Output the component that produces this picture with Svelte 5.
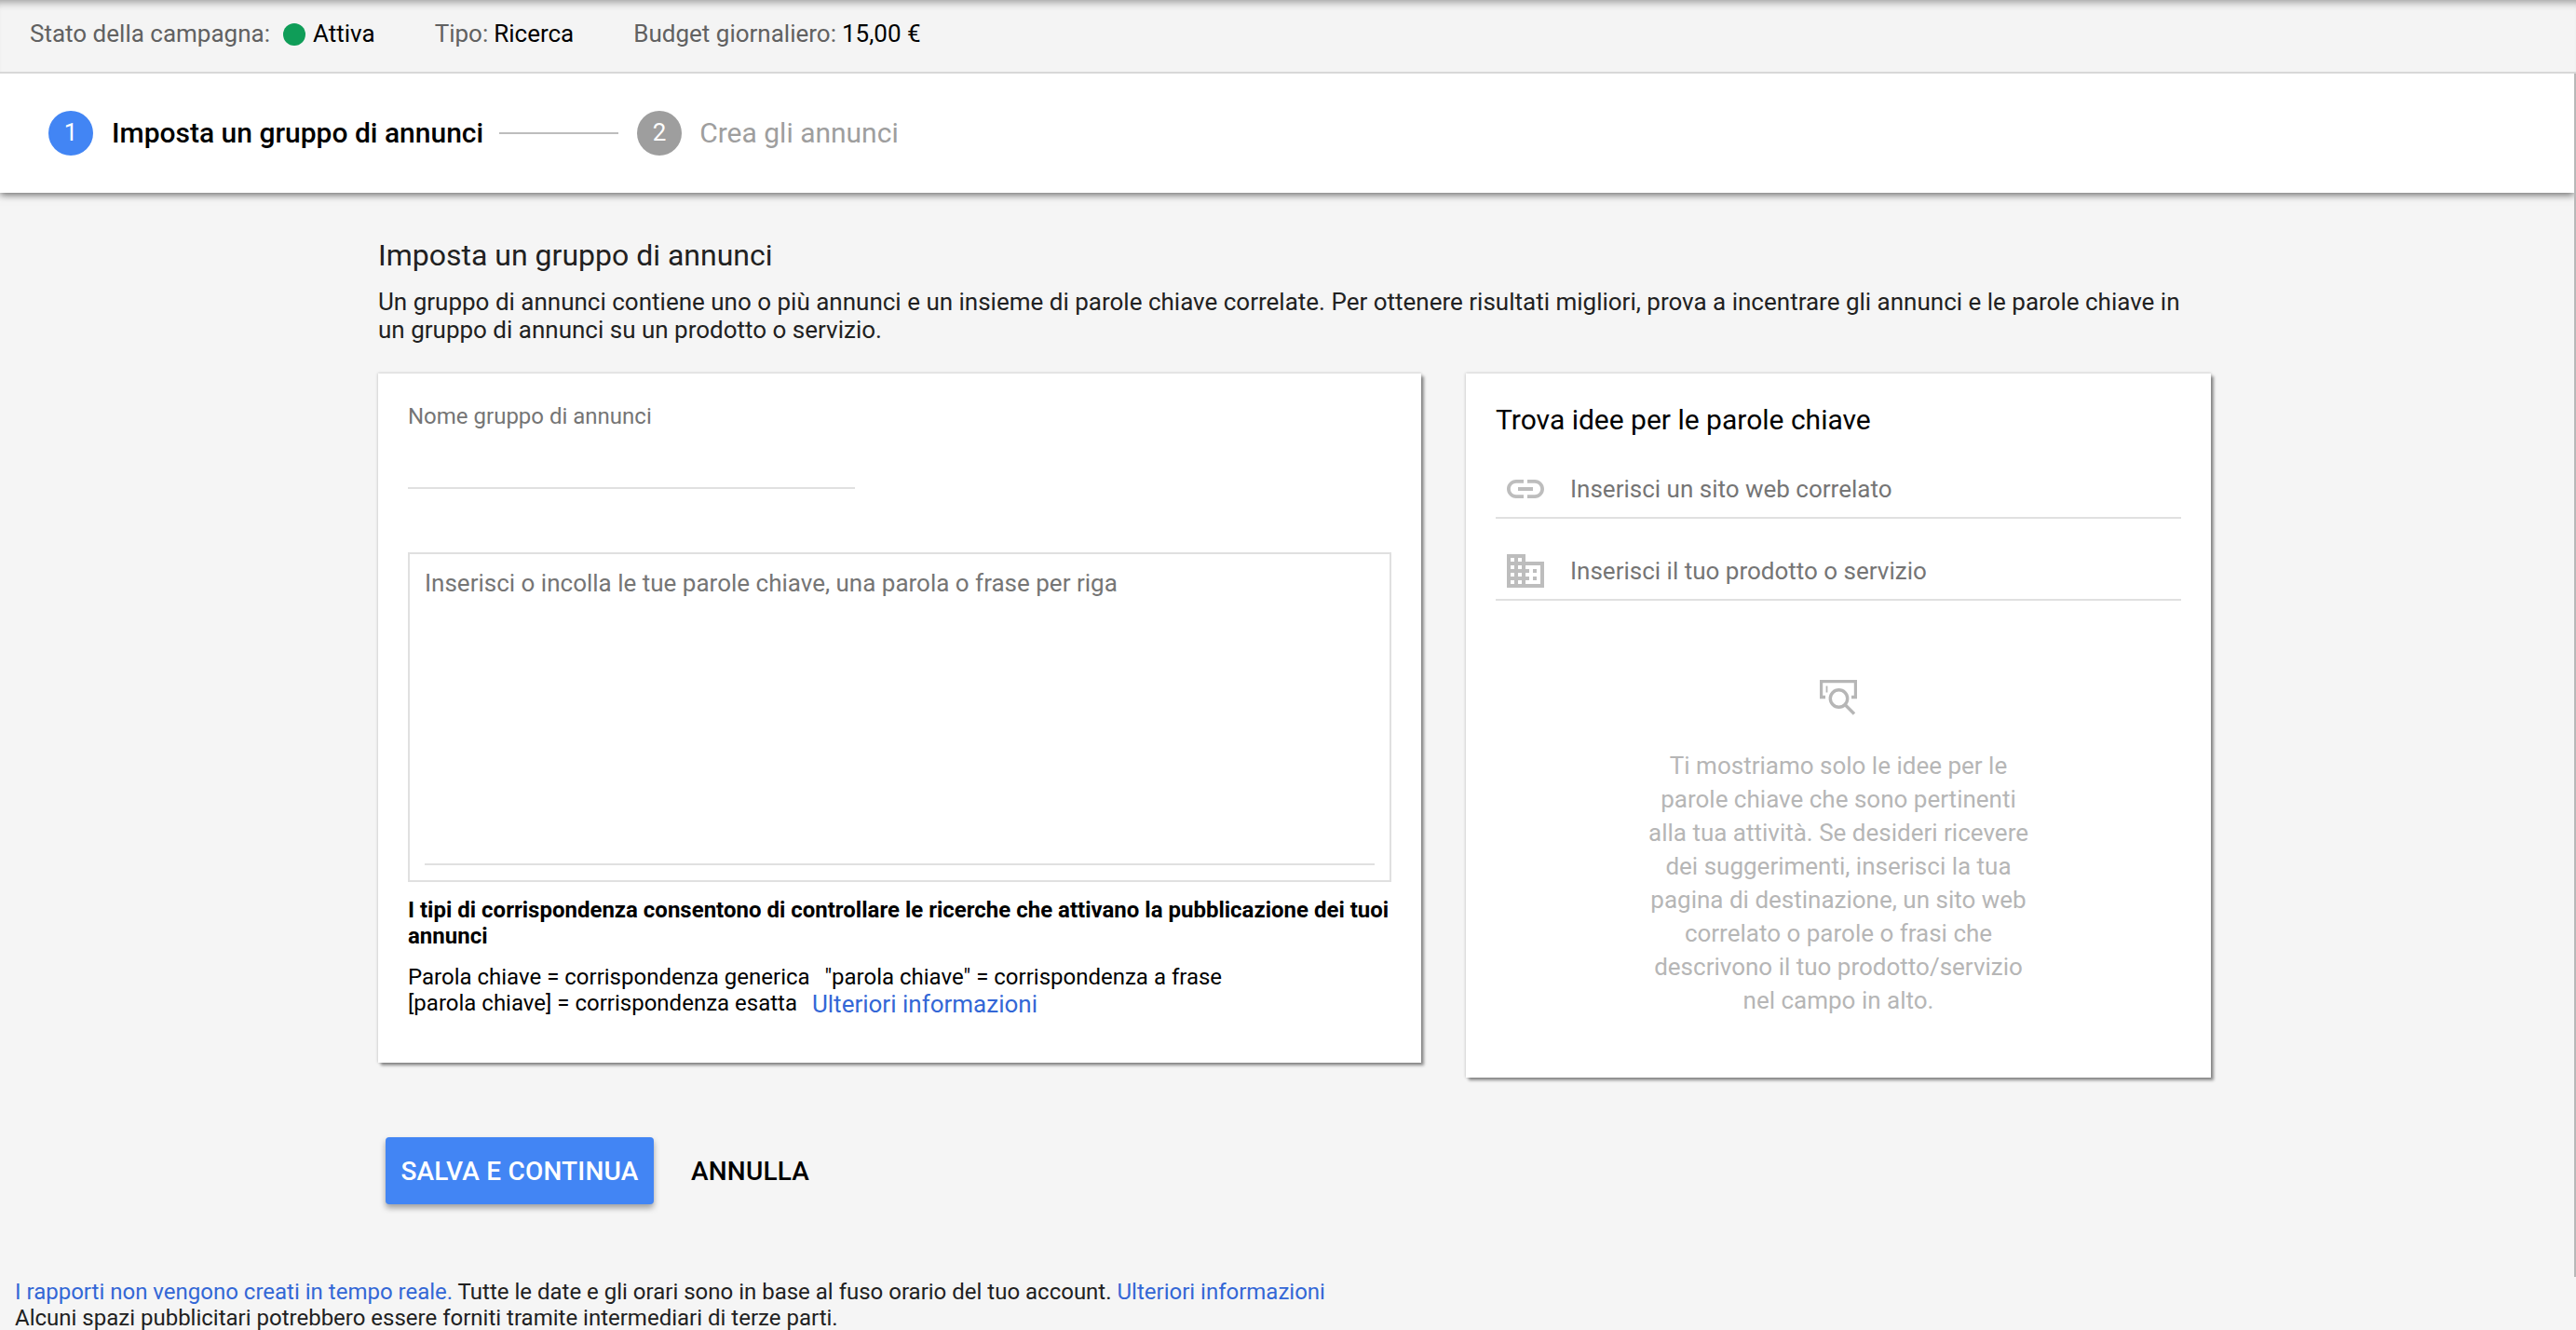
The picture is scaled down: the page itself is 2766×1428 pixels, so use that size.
<script>
	let groupName = '';
	let keywords = '';
	let website = '';
	let product = '';

	const status = [
		{ label: 'Stato della campagna:', value: 'Attiva', active: true },
		{ label: 'Tipo:', value: 'Ricerca' },
		{ label: 'Budget giornaliero:', value: '15,00 €' }
	];
</script>

<div class="page">
	<header class="status-bar">
		{#each status as item}
			<div class="status-item">
				<span class="status-label">{item.label}</span>
				{#if item.active}
					<span class="status-dot"></span>
				{/if}
				<span class="status-value">{item.value}</span>
			</div>
		{/each}
	</header>

	<div class="frame">
		<nav class="stepper">
			<span class="step-number active">1</span>
			<span class="step-title active">Imposta un gruppo di annunci</span>
			<span class="step-line"></span>
			<span class="step-number">2</span>
			<span class="step-title">Crea gli annunci</span>
		</nav>

		<main>
			<h1>Imposta un gruppo di annunci</h1>
			<p class="intro">
				Un gruppo di annunci contiene uno o più annunci e un insieme di parole chiave correlate. Per
				ottenere risultati migliori, prova a incentrare gli annunci e le parole chiave in<br />
				un gruppo di annunci su un prodotto o servizio.
			</p>

			<div class="cards">
				<section class="card group-card">
					<label class="group-label" for="group-name">Nome gruppo di annunci</label>
					<input id="group-name" class="group-input" bind:value={groupName} />
					<div class="keywords">
						<textarea
							bind:value={keywords}
							placeholder="Inserisci o incolla le tue parole chiave, una parola o frase per riga"
						></textarea>
					</div>
					<p class="match-title">
						I tipi di corrispondenza consentono di controllare le ricerche che attivano la
						pubblicazione dei tuoi<br />annunci
					</p>
					<p class="match-types">
						<span class="match">Parola chiave = corrispondenza generica</span>
						<span class="match">"parola chiave" = corrispondenza a frase</span><br />
						<span class="match">[parola chiave] = corrispondenza esatta</span>
						<a class="more" href="#info">Ulteriori informazioni</a>
					</p>
				</section>

				<section class="card ideas-card">
					<h2>Trova idee per le parole chiave</h2>
					<div class="idea-field">
						<svg viewBox="0 0 24 24">
							<path
								d="M3.9 12c0-1.71 1.39-3.1 3.1-3.1h4V7H7c-2.76 0-5 2.24-5 5s2.24 5 5 5h4v-1.9H7c-1.71 0-3.1-1.39-3.1-3.1zM8 13h8v-2H8v2zm9-6h-4v1.9h4c1.71 0 3.1 1.39 3.1 3.1s-1.39 3.1-3.1 3.1h-4V17h4c2.76 0 5-2.24 5-5s-2.24-5-5-5z"
							/>
						</svg>
						<input bind:value={website} placeholder="Inserisci un sito web correlato" />
					</div>
					<div class="idea-field">
						<svg viewBox="0 0 24 24">
							<path
								d="M12 7V3H2v18h20V7H12zM6 19H4v-2h2v2zm0-4H4v-2h2v2zm0-4H4V9h2v2zm0-4H4V5h2v2zm4 12H8v-2h2v2zm0-4H8v-2h2v2zm0-4H8V9h2v2zm0-4H8V5h2v2zm10 12h-8v-2h2v-2h-2v-2h2v-2h-2V9h8v10zm-2-8h-2v2h2v-2zm0 4h-2v2h2v-2z"
							/>
						</svg>
						<input bind:value={product} placeholder="Inserisci il tuo prodotto o servizio" />
					</div>
					<div class="empty">
						<svg class="empty-icon" viewBox="0 0 40 38">
							<path d="M6 18.5H1.5V1.5h37v17H34" />
							<path class="thin" d="M7.5 6.5v7" />
							<circle cx="20.5" cy="20" r="9.2" />
							<path d="M27 26.5l10 10" />
						</svg>
						<p>
							Ti mostriamo solo le idee per le<br />
							parole chiave che sono pertinenti<br />
							alla tua attività. Se desideri ricevere<br />
							dei suggerimenti, inserisci la tua<br />
							pagina di destinazione, un sito web<br />
							correlato o parole o frasi che<br />
							descrivono il tuo prodotto/servizio<br />
							nel campo in alto.
						</p>
					</div>
				</section>
			</div>

			<div class="actions">
				<button class="save">SALVA E CONTINUA</button>
				<button class="cancel">ANNULLA</button>
			</div>
		</main>
	</div>

	<footer>
		<a href="#report">I rapporti non vengono creati in tempo reale.</a> Tutte le date e gli orari sono in
		base al fuso orario del tuo account. <a href="#info">Ulteriori informazioni</a><br />
		Alcuni spazi pubblicitari potrebbero essere forniti tramite intermediari di terze parti.
	</footer>
</div>

<style>
	:global(body) {
		background: #f5f5f5;
		margin: 0;
	}

	.page {
		background: #f5f5f5;
		color: #212121;
		font-family: Roboto, sans-serif;
		font-size: 26px;
		height: 1428px;
		overflow: hidden;
		width: 2766px;
	}

	.page * {
		box-sizing: border-box;
	}

	h1,
	h2,
	p {
		font-weight: 400;
		margin: 0;
	}

	a {
		color: #3367d6;
		text-decoration: none;
	}

	input,
	textarea,
	button {
		background: none;
		border: 0;
		border-radius: 0;
		color: #000;
		font-family: inherit;
		font-size: 26px;
		outline: 0;
		padding: 0;
	}

	::placeholder {
		color: #757575;
		opacity: 1;
	}

	.status-bar {
		background: #f4f4f4;
		border-bottom: 2px solid #d8d8d8;
		box-shadow: inset 0 10px 10px -8px rgba(0, 0, 0, 0.4);
		display: flex;
		gap: 64px;
		height: 79px;
		line-height: 30px;
		padding: 21px 32px 0;
	}

	.status-item {
		display: flex;
		height: 30px;
	}

	.status-label {
		color: #616161;
		margin-right: 6px;
	}

	.status-dot {
		background: #0f9d58;
		border-radius: 50%;
		height: 24px;
		margin: 4px 8px 0 7px;
		margin-left: 8px;
		width: 24px;
	}

	.status-value {
		color: #000;
	}

	.frame {
		border-right: 2px solid #b8b8b8;
		height: 1292px;
	}

	.stepper {
		align-items: center;
		background: #fff;
		box-shadow: 0 2px 8px rgba(0, 0, 0, 0.6);
		clip-path: inset(0 0 -16px 0);
		display: flex;
		height: 128px;
		padding-left: 52px;
	}

	.step-number {
		background: #9e9e9e;
		border-radius: 50%;
		color: #fff;
		font-size: 26px;
		height: 48px;
		line-height: 47px;
		text-align: center;
		width: 48px;
	}

	.step-number.active {
		background: #4285f4;
	}

	.step-title {
		color: #9e9e9e;
		font-size: 30px;
		line-height: 36px;
		margin-left: 19px;
	}

	.step-title.active {
		color: #000;
		font-weight: 500;
		margin-left: 20px;
	}

	.step-line {
		background: #bdbdbd;
		height: 2px;
		margin: 0 20px 0 17px;
		width: 128px;
	}

	main {
		padding: 47px 0 0 406px;
	}

	h1 {
		font-size: 32px;
		line-height: 40px;
	}

	.intro {
		line-height: 30px;
		margin-top: 15px;
		white-space: nowrap;
	}

	.cards {
		align-items: flex-start;
		display: flex;
		gap: 48px;
		margin-top: 32px;
	}

	.card {
		background: #fff;
		box-shadow: 3px 3px 3px rgba(0, 0, 0, 0.4), 0 0 3px rgba(0, 0, 0, 0.25);
		display: flex;
		flex-direction: column;
	}

	.group-card {
		height: 740px;
		padding: 30px 32px 0;
		width: 1120px;
	}

	.group-label {
		color: #757575;
		font-size: 24px;
		line-height: 32px;
	}

	.group-input {
		border-bottom: 2px solid #e0e0e0;
		height: 62px;
		width: 480px;
	}

	.keywords {
		border: 2px solid #e0e0e0;
		height: 354px;
		margin-top: 68px;
		padding: 16px;
	}

	.keywords textarea {
		border-bottom: 2px solid #e0e0e0;
		display: block;
		height: 318px;
		line-height: 30px;
		resize: none;
		width: 100%;
	}

	.match-title {
		color: #000;
		font-size: 24px;
		font-weight: 700;
		line-height: 28px;
		margin-top: 16px;
		white-space: nowrap;
	}

	.match-types {
		color: #000;
		font-size: 24px;
		line-height: 28px;
		margin-top: 16px;
	}

	.match {
		margin-right: 10px;
	}

	.more {
		font-size: 26px;
		line-height: 20px;
		vertical-align: -2px;
	}

	.ideas-card {
		height: 756px;
		padding: 32px 32px 0;
		width: 800px;
	}

	h2 {
		color: #000;
		font-size: 30px;
		line-height: 36px;
	}

	.idea-field {
		align-items: center;
		border-bottom: 2px solid #e0e0e0;
		display: flex;
		height: 88px;
		padding: 32px 0 6px 8px;
	}

	.idea-field svg {
		fill: #bdbdbd;
		flex: none;
		height: 48px;
		width: 48px;
	}

	.idea-field input {
		flex: 1;
		height: 48px;
		margin-left: 24px;
	}

	.empty {
		align-items: center;
		color: #b6b6b6;
		display: flex;
		flex-direction: column;
		line-height: 36px;
		padding-top: 85px;
		text-align: center;
	}

	.empty-icon {
		fill: none;
		height: 38px;
		margin-bottom: 36px;
		stroke: #b6b6b6;
		stroke-width: 3.4;
		width: 40px;
	}

	.empty-icon .thin {
		stroke-width: 1.8;
	}

	.actions {
		display: flex;
		margin-top: 64px;
		padding-left: 8px;
	}

	.actions button {
		font-size: 28px;
		font-weight: 500;
		height: 72px;
		letter-spacing: 0.2px;
	}

	.actions .save {
		background: #4285f4;
		border-radius: 4px;
		box-shadow: 0 4px 6px rgba(0, 0, 0, 0.35);
		color: #fff;
		width: 288px;
	}

	.actions .cancel {
		margin-left: 40px;
	}

	footer {
		font-size: 24px;
		line-height: 28px;
		padding: 2px 16px 0;
		white-space: nowrap;
	}
</style>
